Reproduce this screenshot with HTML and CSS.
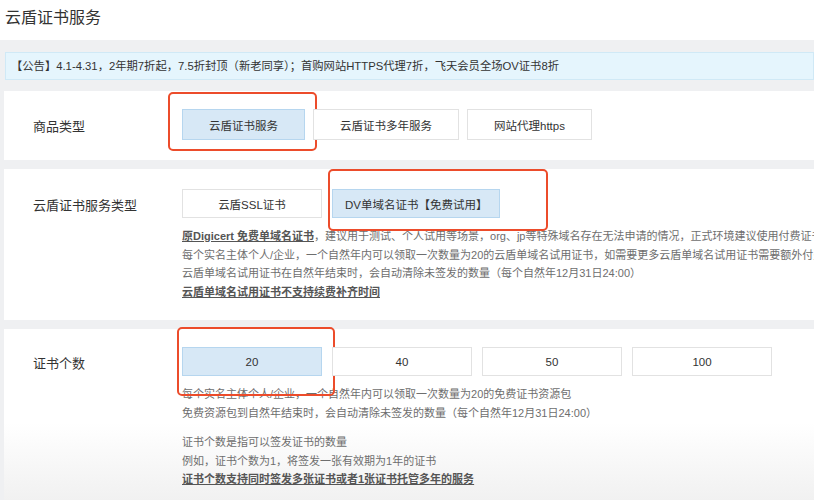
FILE: index.html
```html
<!DOCTYPE html>
<html lang="zh-CN">
<head>
  <meta charset="UTF-8">
  <meta name="viewport" content="width=device-width, initial-scale=1.0">
  <title>云盾证书服务</title>
  <link rel="stylesheet" href="styles.css">
</head>
<body>
  <header class="top">
    <h1>云盾证书服务</h1>
  </header>

  <div class="notice">【公告】4.1-4.31，2年期7折起，7.5折封顶（新老同享）；首购网站HTTPS代理7折，飞天会员全场OV证书8折</div>

  <!-- 商品类型 -->
  <section class="row row-type">
    <div class="row-label">商品类型</div>
    <div class="row-body">
      <div class="opts">
        <span class="opt opt-on">云盾证书服务<i class="mark mark-type"></i></span>
        <span class="opt">云盾证书多年服务</span>
        <span class="opt">网站代理https</span>
      </div>
    </div>
  </section>

  <!-- 服务类型 -->
  <section class="row row-ssl">
    <div class="row-label">云盾证书服务类型</div>
    <div class="row-body">
      <div class="opts">
        <span class="opt">云盾SSL证书</span>
        <span class="opt opt-on">DV单域名证书【免费试用】<i class="mark mark-ssl"></i></span>
      </div>
      <div class="desc">
        <p><span class="em">原Digicert 免费单域名证书</span>，建议用于测试、个人试用等场景，org、jp等特殊域名存在无法申请的情况，正式环境建议使用付费证书</p>
        <p>每个实名主体个人/企业，一个自然年内可以领取一次数量为20的云盾单域名试用证书，如需要更多云盾单域名试用证书需要额外付费购买</p>
        <p>云盾单域名试用证书在自然年结束时，会自动清除未签发的数量（每个自然年12月31日24:00）</p>
        <p><span class="em">云盾单域名试用证书不支持续费补齐时间</span></p>
      </div>
    </div>
  </section>

  <!-- 证书个数 -->
  <section class="row row-count">
    <div class="row-label">证书个数</div>
    <div class="row-body">
      <div class="opts">
        <span class="opt opt-on">20<i class="mark mark-num"></i></span>
        <span class="opt">40</span>
        <span class="opt">50</span>
        <span class="opt">100</span>
      </div>
      <div class="desc">
        <p>每个实名主体个人/企业，一个自然年内可以领取一次数量为20的免费证书资源包</p>
        <p>免费资源包到自然年结束时，会自动清除未签发的数量（每个自然年12月31日24:00）</p>
        <p class="gap">证书个数是指可以签发证书的数量</p>
        <p>例如，证书个数为1，将签发一张有效期为1年的证书</p>
        <p><span class="em">证书个数支持同时签发多张证书或者1张证书托管多年的服务</span></p>
      </div>
    </div>
  </section>

  <div class="strip"></div>
</body>
</html>
```

FILE: styles.css
```css
* {
  box-sizing: border-box;
}

body {
  margin: 0;
  width: 814px;
  height: 500px;
  overflow: hidden;
  background: #eff0f2;
  font-family: "Liberation Sans", "Noto Sans CJK SC", sans-serif;
  color: #333;
}

.top {
  height: 40px;
  padding: 0 5px;
  background: #fff;
  display: flex;
  align-items: center;
}

.top h1 {
  margin: -4px 0 0;
  font-size: 16px;
  font-weight: normal;
  line-height: 20px;
}

.notice {
  margin: 12px 0 0 5px;
  height: 28px;
  padding-left: 5px;
  line-height: 26px;
  background: #e5f5fd;
  border: 1px solid #d0e9f6;
  font-size: 11.3px;
  white-space: nowrap;
}

/* 每一个选项区块 */
.row {
  display: flex;
  margin: 11px 0 0 4px;
  padding: 18px 0;
  background: #fff;
}

.row + .row {
  margin-top: 9px;
}

.row-label {
  width: 178px;
  flex: none;
  padding: 2px 0 0 29px;
  font-size: 13px;
  line-height: 29px;
}

.row-body {
  flex: 1;
  min-width: 0;
}

.opts {
  display: flex;
  gap: 10px;
}

.opt {
  position: relative;
  display: flex;
  align-items: center;
  justify-content: center;
  height: 29px;
  min-width: 140px;
  padding: 0 12px;
  border: 1px solid #e2e2e2;
  background: #fff;
  font-size: 11.5px;
}

.opt-on {
  background: #d7e8f6;
  border-color: #b6d6ef;
}

.row-type .row-label {
  line-height: 31px;
}

.row-type .opts {
  gap: 8px;
}

.row-type .opt {
  height: 31px;
  min-width: 0;
  padding: 0 26px;
}

.row-ssl {
  padding: 20px 0 19px;
}

/* 截图上的红框标注 */
.mark {
  position: absolute;
  border: 2px solid #ec4c2b;
  border-radius: 5px;
}

.mark-type {
  left: -15px;
  right: -13px;
  top: -18px;
  bottom: -12px;
}

.mark-ssl {
  left: -5px;
  right: -49px;
  top: -21px;
  bottom: -14px;
}

.mark-num {
  left: -6px;
  right: -14px;
  top: -21px;
  bottom: -21px;
}

.desc {
  margin-top: 9px;
  font-size: 11px;
  line-height: 18.5px;
  color: #6e6e6e;
  white-space: nowrap;
}

.desc p {
  margin: 0;
}

.desc .gap {
  margin-top: 11px;
}

.em {
  color: #555;
  font-weight: bold;
  text-decoration: underline;
}

.row-count {
  padding-bottom: 11px;
  background: linear-gradient(#fff 55%, #f1f1f1);
}

.strip {
  height: 3px;
  background: #fce3e3;
}
```
